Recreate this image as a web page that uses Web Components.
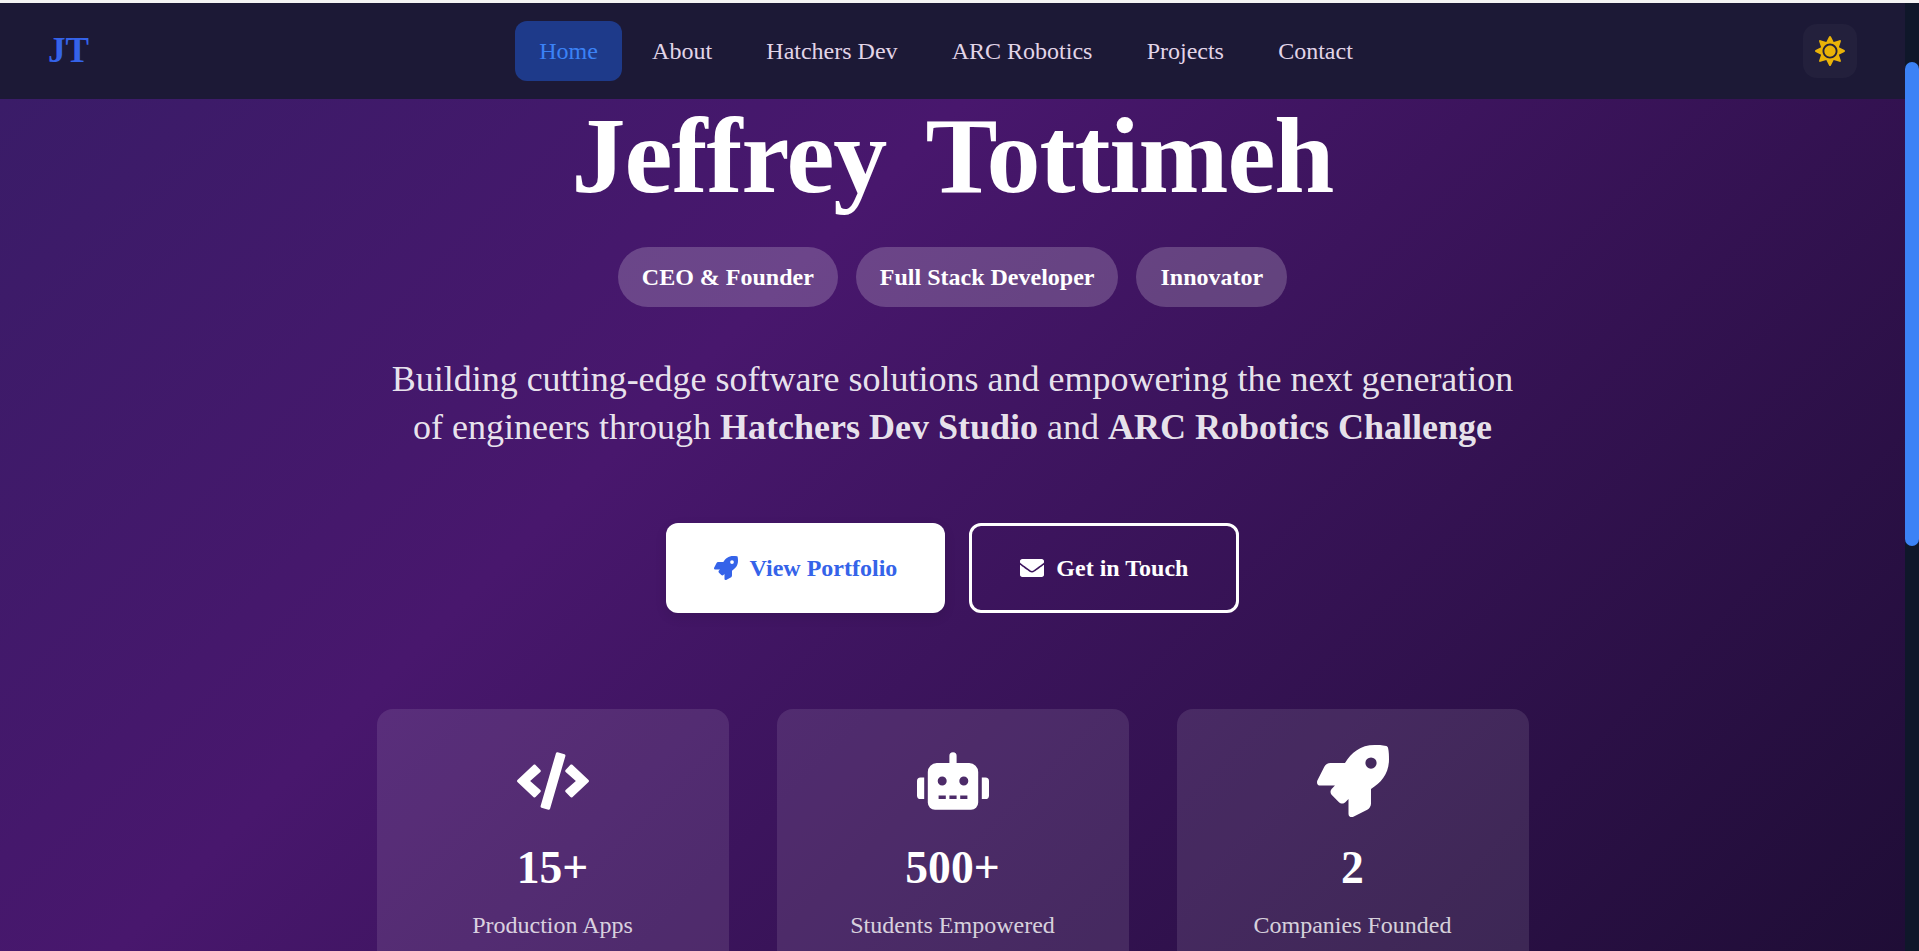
<!DOCTYPE html>
<html lang="en">
<head>
<meta charset="utf-8">
<title>Jeffrey Tottimeh</title>
<style>
  html, body { margin: 0; height: 951px; overflow: hidden; background: #f4f4f4; }
  body { font-family: "Liberation Serif", "Times New Roman", serif; padding-top: 3px; box-sizing: border-box; }
  page-shell { height: 948px; }
</style>
</head>
<body>
<page-shell>
  <site-nav></site-nav>
  <hero-section>
    <h1 slot="title">Jeffrey Tottimeh</h1>
    <role-pill slot="roles">CEO &amp; Founder</role-pill>
    <role-pill slot="roles">Full Stack Developer</role-pill>
    <role-pill slot="roles">Innovator</role-pill>
    <span slot="tagline">Building cutting-edge software solutions and empowering the next generation of engineers through <strong>Hatchers Dev Studio</strong> and <strong>ARC Robotics Challenge</strong></span>
    <cta-button slot="actions" kind="primary" icon="rocket">View Portfolio</cta-button>
    <cta-button slot="actions" kind="outline" icon="envelope">Get in Touch</cta-button>
    <stat-card slot="stats" icon="code" value="15+">Production Apps</stat-card>
    <stat-card slot="stats" icon="robot" value="500+">Students Empowered</stat-card>
    <stat-card slot="stats" icon="rocket" value="2">Companies Founded</stat-card>
  </hero-section>
</page-shell>

<script>
const ICONS = {
  rocket: ['0 0 512 512', 'M505.12 19.09c-1.19-5.53-6.66-11-12.21-12.19C460.72 0 435.51 0 410.41 0 307.18 0 245.27 55.2 199.05 128H94.84c-16.35.02-35.56 11.88-42.89 26.48L2.52 253.3A28.4 28.4 0 0 0 0 264a24 24 0 0 0 24 24h103.81l-22.47 22.47c-11.37 11.36-13 32.26 0 45.25l50.91 50.91c11.16 11.19 32.16 13.16 45.28 0l22.47-22.47V488a24 24 0 0 0 24.01 24 28.56 28.56 0 0 0 10.7-2.52l98.73-49.39c14.63-7.3 26.51-26.5 26.51-42.86V312.8c72.6-46.31 128.03-108.41 128.03-211.1.01-25.2.01-50.4-6.95-82.61zM384.04 168a40 40 0 1 1 40.01-40 40.02 40.02 0 0 1-40.01 40z'],
  envelope: ['0 0 512 512', 'M502.3 190.8c3.9-3.1 9.7-.2 9.7 4.7V400c0 26.5-21.5 48-48 48H48c-26.5 0-48-21.5-48-48V195.6c0-5 5.7-7.8 9.7-4.7 22.4 17.4 52.1 39.5 154.1 113.6 21.1 15.4 56.7 47.8 92.2 47.6 35.7.3 72-32.8 92.3-47.6 102-74.1 131.6-96.3 154-113.7zM256 320c23.2.4 56.6-29.2 73.4-41.4 132.7-96.3 142.8-104.7 173.4-128.7 5.8-4.5 9.2-11.5 9.2-18.9v-19c0-26.5-21.5-48-48-48H48C21.5 64 0 85.5 0 112v19c0 7.4 3.4 14.3 9.2 18.9 30.6 23.9 40.7 32.4 173.4 128.7 16.8 12.2 50.2 41.8 73.4 41.4z'],
  code: ['0 0 640 512', 'M278.9 511.5l-61-17.7c-6.4-1.8-10-8.5-8.2-14.9L346.2 8.7c1.8-6.4 8.5-10 14.9-8.2l61 17.7c6.4 1.8 10 8.5 8.2 14.9L293.8 503.3c-1.9 6.4-8.5 10.1-14.9 8.2zm-114-112.2l43.5-46.4c4.6-4.9 4.3-12.7-.8-17.2L117 256l90.6-79.7c5.1-4.5 5.5-12.3.8-17.2l-43.5-46.4c-4.5-4.8-12.1-5.1-17-.5L3.8 247.2c-5.1 4.7-5.1 12.8 0 17.5l144.1 135.1c4.9 4.6 12.5 4.4 17-.5zm327.2.6l144.1-135.1c5.1-4.7 5.1-12.8 0-17.5L492.1 112.1c-4.8-4.5-12.4-4.3-17 .5L431.6 159c-4.6 4.9-4.3 12.7.8 17.2L523 256l-90.6 79.7c-5.1 4.5-5.5 12.3-.8 17.2l43.5 46.4c4.5 4.9 12.1 5.1 17 .6z'],
  robot: ['0 0 640 512', 'M32 224h32v192H32a32 32 0 0 1-32-32V256a32 32 0 0 1 32-32zm512-48v272a64.06 64.06 0 0 1-64 64H160a64.06 64.06 0 0 1-64-64V176a80 80 0 0 1 80-80h112V32a32 32 0 0 1 64 0v64h112a80 80 0 0 1 80 80zM264 256a40 40 0 1 0-40 40 40 40 0 0 0 40-40zm-8 128h-64v32h64zm96 0h-64v32h64zm104-128a40 40 0 1 0-40 40 40 40 0 0 0 40-40zm-8 128h-64v32h64zm192-128v128a32 32 0 0 1-32 32h-32V224h32a32 32 0 0 1 32 32z'],
  sun: ['0 0 512 512', 'M256 160c-52.9 0-96 43.1-96 96s43.1 96 96 96 96-43.1 96-96-43.1-96-96-96zm246.4 80.5l-94.7-47.3 33.5-100.4c4.5-13.6-8.4-26.5-21.9-21.9l-100.4 33.5-47.4-94.8c-6.4-12.8-24.6-12.8-31 0l-47.3 94.7L92.7 70.8c-13.6-4.5-26.5 8.4-21.9 21.9l33.5 100.4-94.7 47.4c-12.8 6.4-12.8 24.6 0 31l94.7 47.3-33.5 100.5c-4.5 13.6 8.4 26.5 21.9 21.9l100.4-33.5 47.3 94.7c6.4 12.8 24.6 12.8 31 0l47.3-94.7 100.4 33.5c13.6 4.5 26.5-8.4 21.9-21.9l-33.5-100.4 94.7-47.3c13-6.5 13-24.7.2-31.1zm-155.9 106c-49.9 49.9-131.1 49.9-181 0-49.9-49.9-49.9-131.1 0-181 49.9-49.9 131.1-49.9 181 0 49.9 49.9 49.9 131.1 0 181z']
};

function iconSvg(name) {
  const [box, d] = ICONS[name];
  return `<svg viewBox="${box}" aria-hidden="true"><path fill="currentColor" d="${d}"/></svg>`;
}

class PageShell extends HTMLElement {
  constructor() {
    super();
    this.attachShadow({ mode: 'open' });
    this.shadowRoot.innerHTML = `
      <style>
        :host { display: grid; grid-template-columns: 1fr 14px; overflow: hidden; }
        .main { display: flex; flex-direction: column; min-width: 0; height: 948px; overflow: hidden; }
        .rail { background: #0f172a; }
        .thumb { height: 484px; margin-top: 59px; background: #3b82f6; border-radius: 7px; }
      </style>
      <div class="main"><slot></slot></div>
      <div class="rail"><div class="thumb"></div></div>
    `;
  }
}

class SiteNav extends HTMLElement {
  constructor() {
    super();
    this.attachShadow({ mode: 'open' });
    const links = ['Home', 'About', 'Hatchers Dev', 'ARC Robotics', 'Projects', 'Contact'];
    this.shadowRoot.innerHTML = `
      <style>
        :host { display: block; flex: none; background: #1c1936; }
        nav { display: flex; justify-content: space-between; align-items: center; height: 96px; padding: 0 48px; box-sizing: border-box; }
        .logo { font-size: 35.2px; font-weight: bold; color: #3563e9; }
        ul { display: flex; gap: 6.2px; margin: 0; padding: 0; list-style: none; }
        a { display: block; padding: 12px 24px; font-size: 24px; line-height: 36px; color: #e2d5e8; text-decoration: none; border-radius: 12px; }
        a.active { color: #3b82f6; background: #1e3a8a; }
        button { display: flex; align-items: center; justify-content: center; width: 54px; height: 54px; padding: 0; border: 0; border-radius: 14px; background: rgba(255,255,255,.03); color: #eab308; }
        svg { width: 30px; height: 30px; }
      </style>
      <nav>
        <div class="logo">JT</div>
        <ul>${links.map((t, i) => `<li><a href="#" class="${i === 0 ? 'active' : ''}">${t}</a></li>`).join('')}</ul>
        <button aria-label="Theme">${iconSvg('sun')}</button>
      </nav>
    `;
  }
}

class HeroSection extends HTMLElement {
  constructor() {
    super();
    this.attachShadow({ mode: 'open' });
    this.shadowRoot.innerHTML = `
      <style>
        :host { display: block; flex: 1; min-height: 0; color: #fff; text-align: center;
          background: linear-gradient(135deg, #3a1c68 0%, #48176d 35%, #1f0d36 100%); }
        .inner { display: flex; flex-direction: column; align-items: center; }
        ::slotted(h1) { margin: 0; font-size: 108px; line-height: 114px; font-weight: bold; letter-spacing: -1px; word-spacing: 15px; color: #fff; }
        .roles { display: flex; gap: 18px; justify-content: center; margin-top: 34px; }
        .tagline { width: 1150px; margin-top: 48px; font-size: 36px; line-height: 48px; color: rgba(255,255,255,.9); }
        .actions { display: flex; gap: 24px; justify-content: center; margin-top: 72px; }
        .stats { display: grid; grid-template-columns: repeat(3, 352px); gap: 48px; margin-top: 96px; }
      </style>
      <div class="inner">
        <slot name="title"></slot>
        <div class="roles"><slot name="roles"></slot></div>
        <div class="tagline"><slot name="tagline"></slot></div>
        <div class="actions"><slot name="actions"></slot></div>
        <div class="stats"><slot name="stats"></slot></div>
      </div>
    `;
  }
}

class RolePill extends HTMLElement {
  constructor() {
    super();
    this.attachShadow({ mode: 'open' });
    this.shadowRoot.innerHTML = `
      <style>
        :host { display: block; padding: 12px 24px; font-size: 24px; line-height: 36px; font-weight: bold; color: #fff;
          background: rgba(255,255,255,.2); border-radius: 30px; }
      </style>
      <slot></slot>
    `;
  }
}

class CtaButton extends HTMLElement {
  constructor() {
    super();
    this.attachShadow({ mode: 'open' });
    this.shadowRoot.innerHTML = `
      <style>
        :host { display: flex; align-items: center; gap: 12px; font-size: 24px; line-height: 36px; font-weight: bold; border-radius: 12px; }
        :host([kind=primary]) { padding: 27px 48px; background: #fff; color: #3563e9; box-shadow: 0 4px 12px rgba(0,0,0,.1); }
        :host([kind=outline]) { padding: 24px 48px; border: 3px solid #fff; color: #fff; }
        svg { width: 24px; height: 24px; flex: none; }
      </style>
      ${iconSvg(this.getAttribute('icon'))}<slot></slot>
    `;
  }
}

class StatCard extends HTMLElement {
  constructor() {
    super();
    this.attachShadow({ mode: 'open' });
    this.shadowRoot.innerHTML = `
      <style>
        :host { display: flex; flex-direction: column; align-items: center; padding: 36px 24px; height: 300px; box-sizing: border-box;
          background: rgba(255,255,255,.1); border-radius: 16px; }
        svg { display: block; width: 72px; height: 72px; color: #fff; }
        .value { margin-top: 17px; font-size: 45.6px; line-height: 68px; font-weight: bold; color: #fff; }
        .label { margin-top: 5px; font-size: 24px; line-height: 36px; color: rgba(255,255,255,.8); }
      </style>
      ${iconSvg(this.getAttribute('icon'))}
      <div class="value">${this.getAttribute('value')}</div>
      <div class="label"><slot></slot></div>
    `;
  }
}

customElements.define('page-shell', PageShell);
customElements.define('site-nav', SiteNav);
customElements.define('hero-section', HeroSection);
customElements.define('role-pill', RolePill);
customElements.define('cta-button', CtaButton);
customElements.define('stat-card', StatCard);
</script>
</body>
</html>
